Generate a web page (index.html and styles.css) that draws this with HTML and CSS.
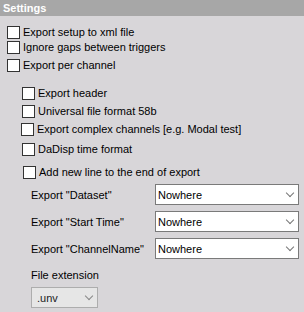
FILE: index.html
```html
<!DOCTYPE html>
<html>
<head>
  <meta charset="UTF-8">
  <title>Settings</title>
  <link rel="stylesheet" href="styles.css">
</head>
<body>
  <div class="header">Settings</div>

  <div class="main">
    <label class="row r1"><span class="box"></span>Export setup to xml file</label>
    <label class="row r2"><span class="box"></span>Ignore gaps between triggers</label>
    <label class="row r3"><span class="box"></span>Export per channel</label>
  </div>

  <div class="sub">
    <label class="row s1"><span class="box"></span>Export header</label>
    <label class="row s2"><span class="box"></span>Universal file format 58b</label>
    <label class="row s3"><span class="box"></span>Export complex channels [e.g. Modal test]</label>
    <label class="row s4"><span class="box"></span>DaDisp time format</label>
    <label class="row s5"><span class="box"></span>Add new line to the end of export</label>
  </div>

  <div class="fields">
    <span>Export "Dataset"</span>
    <div class="select"><span>Nowhere</span><span class="chev"></span></div>
    <span>Export "Start Time"</span>
    <div class="select"><span>Nowhere</span><span class="chev"></span></div>
    <span>Export "ChannelName"</span>
    <div class="select"><span>Nowhere</span><span class="chev"></span></div>
  </div>

  <div class="ext">
    <div class="ext-label">File extension</div>
    <div class="select small"><span>.unv</span><span class="chev"></span></div>
  </div>
</body>
</html>
```

FILE: styles.css
```css
body { margin: 0; background: #d8d6d9; font-family: "Liberation Sans", Arial, sans-serif; font-size: 11px; color: #000; width: 304px; height: 312px; overflow: hidden; }
.header { height: 16px; line-height: 16px; background: #a7a7a7; color: #fff; font-weight: bold; padding-left: 3px; }

.row { display: flex; align-items: center; height: 13px; line-height: 13px; }
.box { width: 11px; height: 11px; border: 1px solid #333; background: #fff; margin-right: 3px; flex: none; }

.main { padding: 10px 0 0 7px; }
.r2 { margin-top: 2px; }
.r3 { margin-top: 5px; }

.sub { padding: 15px 0 0 22px; }
.s2, .s3 { margin-top: 5px; }
.s3 { margin-left: -1px; }
.s4 { margin-top: 7px; }
.s5 { margin-top: 10px; margin-left: 1px; }

.fields { display: grid; grid-template-columns: 124px 144px; row-gap: 6px; align-items: center; padding: 5px 0 0 31px; }
.select { height: 19px; border: 1px solid #7a7a7a; background: #fff; display: flex; align-items: center; justify-content: space-between; padding: 0 5px 0 2px; }
.chev { width: 5px; height: 5px; border-right: 1px solid #777; border-bottom: 1px solid #777; transform: rotate(45deg); margin-top: -4px; }

.ext { padding: 9px 0 0 31px; }
.ext-label { height: 14px; line-height: 14px; }
.select.small { width: 55px; margin-top: 5px; background: #e6e6e6; border-color: #adadad; color: #222; padding-left: 5px; }
.select.small .chev { border-color: #888; }
```
